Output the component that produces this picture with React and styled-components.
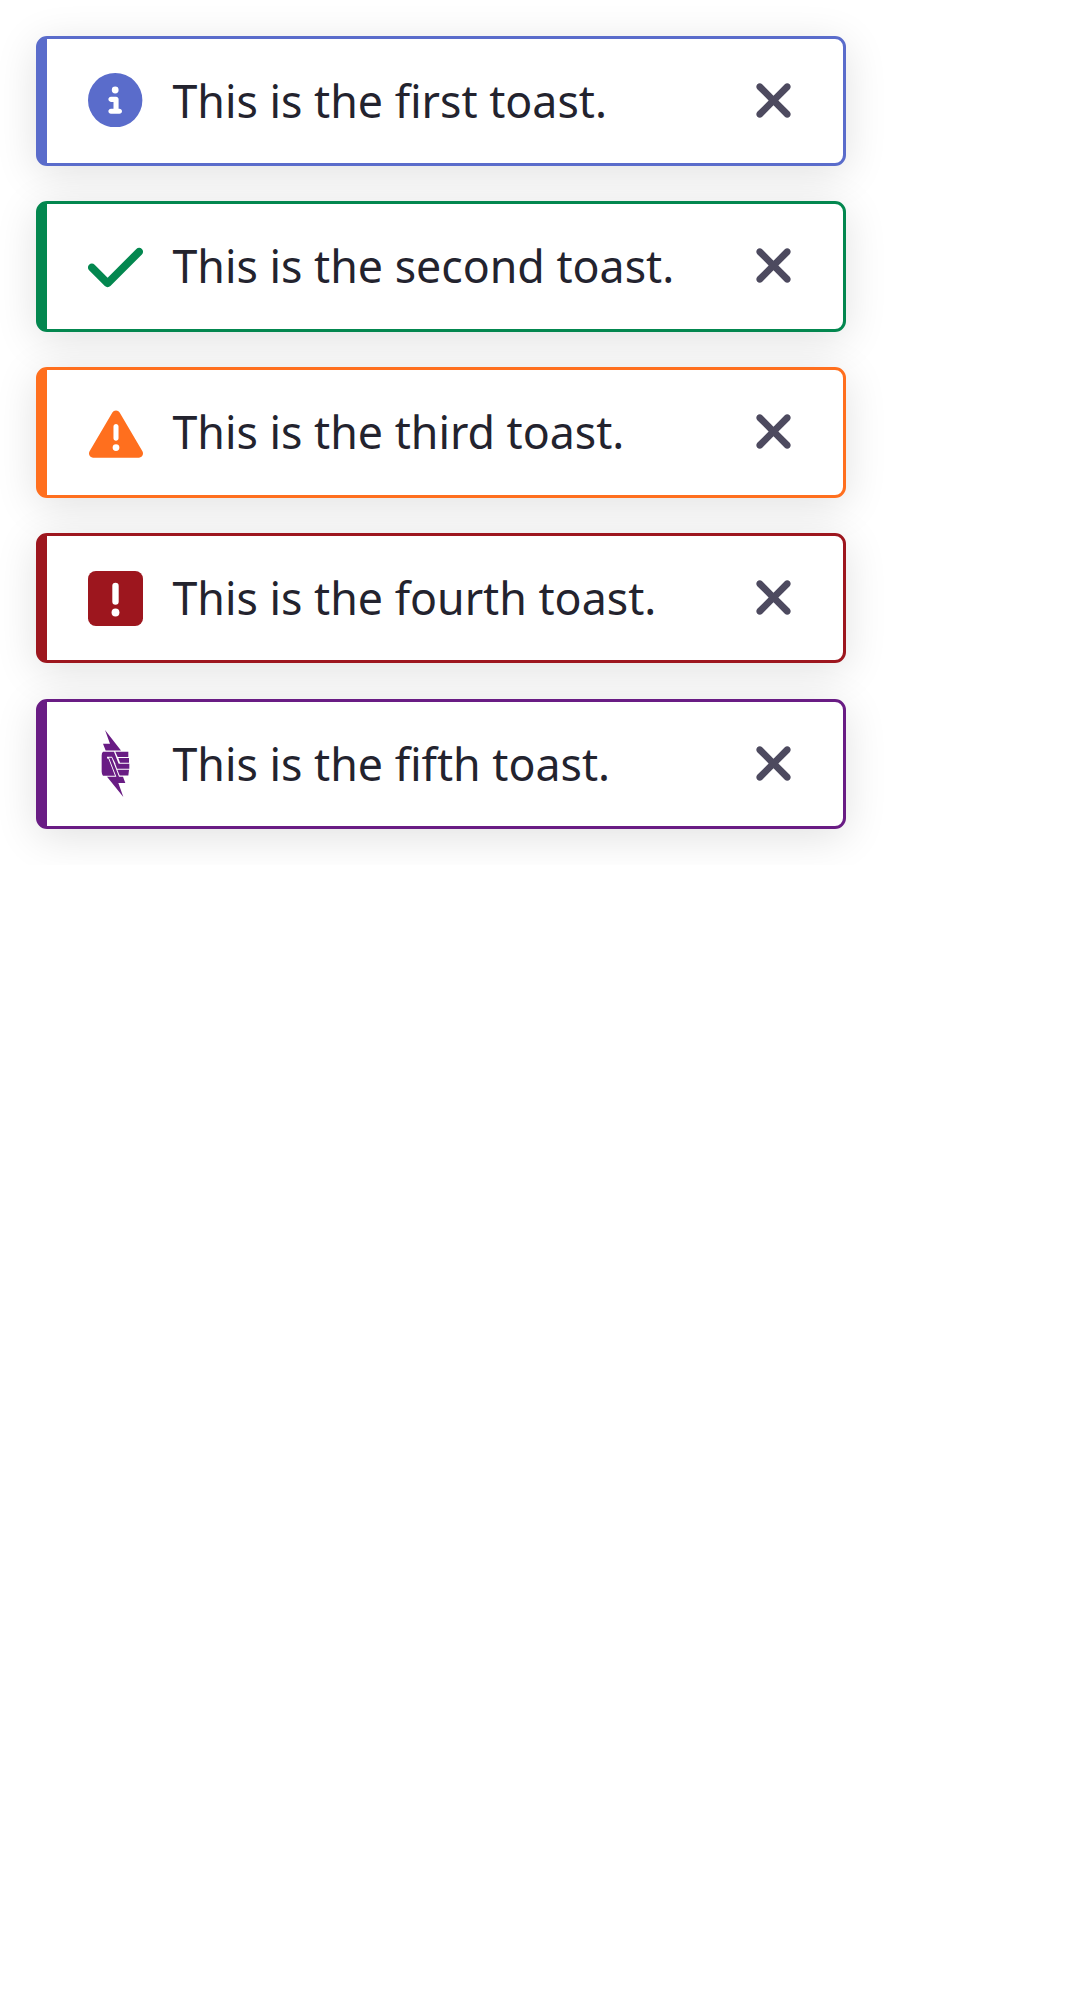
import React from "react";
import styled, { createGlobalStyle } from "styled-components";
import { FaCheck, FaCircleInfo, FaTriangleExclamation, FaXmark } from "react-icons/fa6";

const GlobalStyle = createGlobalStyle`
  body {
    margin: 0;
    background: #fff;
  }
`;

const ToastStack = styled.main`
  display: flex;
  flex-direction: column;
  gap: 35.25px;
  width: 810px;
  padding: 35.5px 36px;
  font-family: "Noto Sans", "Open Sans", sans-serif;
`;

const Toast = styled.section`
  display: flex;
  align-items: center;
  box-sizing: border-box;
  height: 130.5px;
  padding: 0 49px 0 41px;
  border: 3px solid ${(p) => p.$accent};
  border-left-width: 11px;
  border-radius: 11px;
  background: #fff;
  color: ${(p) => p.$accent};
  box-shadow: 0 8px 43px rgba(0, 0, 0, 0.12);
`;

const IconSlot = styled.span`
  display: flex;
  flex: none;
  align-items: center;
  justify-content: center;
  width: 55px;
  height: 70px;
  padding-bottom: ${(p) => p.$lift || 0}px;
  padding-top: ${(p) => p.$drop || 0}px;

  svg {
    display: block;
    flex: none;
  }
`;

const Message = styled.p`
  flex: 1;
  margin: 0 0 0 29.5px;
  padding-bottom: 1.5px;
  color: #23232e;
  font-size: 44.7px;
  line-height: 61px;
  white-space: nowrap;
`;

const CloseButton = styled.button`
  display: flex;
  align-items: center;
  justify-content: center;
  width: 41px;
  height: 55px;
  padding: 0 0 1.5px;
  border: 0;
  background: none;
  color: #4d4a5f;

  svg {
    flex: none;
  }
`;

const SquareExclamation = () => (
  <svg width="55" height="55" viewBox="0 0 448 448" fill="none">
    <rect width="448" height="448" rx="64" fill="currentColor" />
    <rect x="198" y="95" width="52" height="180" rx="26" fill="#fff" />
    <circle cx="224" cy="338" r="32" fill="#fff" />
  </svg>
);

const FistBolt = () => (
  <svg width="29" height="67.5" viewBox="-1 0 87 202" fill="currentColor">
    <path d="M11 0 59 61H13L5 41H26Z" />
    <path d="M5 65H38L53 104H44L32 80H17V85H21L41 137H5Q1 132 1 125V76Q1 69 5 65Z" />
    <path d="M42 65H81V81H49Z" />
    <path d="M51 84H83V98H56Z" />
    <path d="M42 101H84V116H47Z" />
    <path d="M48 119H83L81 136H55Z" />
    <path d="M23 83H31L53 140H65L72 159H51L66 201L17 140H45Z" />
  </svg>
);

const toasts = [
  { accent: "#5a6ccb", icon: <FaCircleInfo size={54.4} />, lift: 2, text: "This is the first toast." },
  { accent: "#03874f", icon: <FaCheck size={63} />, drop: 2, text: "This is the second toast." },
  { accent: "#ff6f1e", icon: <FaTriangleExclamation size={54} />, drop: 3, text: "This is the third toast." },
  { accent: "#9d161e", icon: <SquareExclamation />, text: "This is the fourth toast." },
  { accent: "#691c84", icon: <FistBolt />, text: "This is the fifth toast." },
];

export default function App() {
  return (
    <>
      <GlobalStyle />
      <ToastStack>
        {toasts.map((t) => (
          <Toast key={t.text} $accent={t.accent} role="status">
            <IconSlot $lift={t.lift} $drop={t.drop}>{t.icon}</IconSlot>
            <Message>{t.text}</Message>
            <CloseButton aria-label="Close">
              <FaXmark size={55} />
            </CloseButton>
          </Toast>
        ))}
      </ToastStack>
    </>
  );
}
